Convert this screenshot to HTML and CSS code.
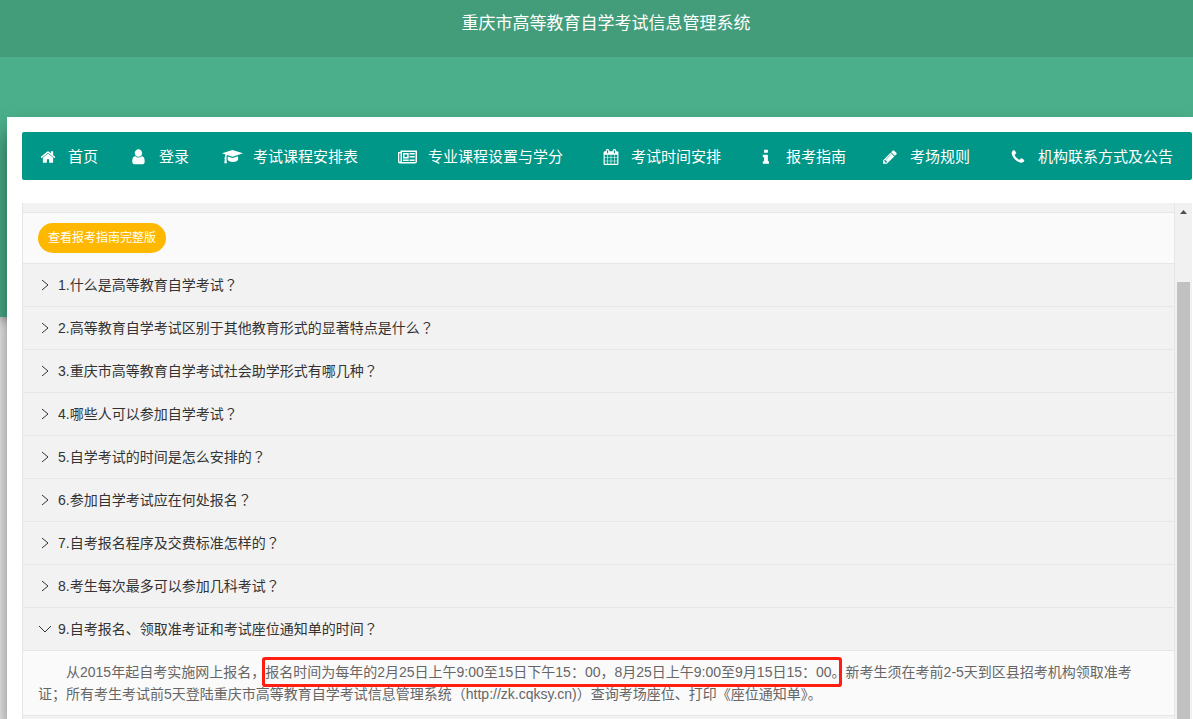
FILE: index.html
```
<!DOCTYPE html>
<html lang="zh-CN">
<head>
<meta charset="utf-8">
<title>重庆市高等教育自学考试信息管理系统</title>
<link rel="stylesheet" href="styles.css">
</head>
<body>
<div class="hero"></div>
<div class="page">
  <header class="header"><h1 class="title">重庆市高等教育自学考试信息管理系统</h1></header>
  <main class="panel">
    <nav class="nav">
      <a class="nav-item tight" href="#"><svg class="icon" viewBox="0 0 1792 1792"><path d="M1472 992v480q0 26-19 45t-45 19h-384v-384h-256v384h-384q-26 0-45-19t-19-45v-480q0-1 .5-3t.5-3l575-474 575 474q1 2 1 6zm223-69l-62 74q-8 9-21 11h-3q-13 0-21-7l-692-577-692 577q-12 8-24 7-13-2-21-11l-62-74q-8-10-7-23.5t11-21.5l719-599q32-26 76-26t76 26l244 204v-195q0-14 9-23t23-9h192q14 0 23 9t9 23v408l219 182q10 8 11 21.5t-7 23.5z"/></svg>首页</a>
      <a class="nav-item tight" href="#"><svg class="icon" viewBox="128 96 1648 1648"><path d="M1536 1399q0 109-62.5 187t-150.5 78h-854q-88 0-150.5-78t-62.5-187q0-85 8.5-160.5t31.5-152 58.5-131 94-89 134.5-34.5q131 128 313 128t313-128q76 0 134.5 34.5t94 89 58.5 131 31.5 152 8.5 160.5zm-256-887q0 159-112.5 271.5t-271.5 112.5-271.5-112.5-112.5-271.5 112.5-271.5 271.5-112.5 271.5 112.5 112.5 271.5z"/></svg>登录</a>
      <a class="nav-item" href="#"><svg class="icon wide" viewBox="0 0 21 16"><path d="M10.500 1L21 4.300L10.500 7.700L5.200 6C4.600 6.600 4.400 7.300 4.300 8.300C4.900 8.700 4.900 9.500 4.400 9.900L4.900 14.300H2.300L2.800 9.900C2.300 9.500 2.300 8.700 2.900 8.300C2.900 7.200 3.200 6.200 3.700 5.500L0 4.300Z"/><path d="M5.800 7.400L10.500 8.900L16 7.200L16.200 10.300C16 12 13.500 13 10.900 13C8.200 13 5.800 12 5.600 10.300Z"/></svg>考试课程安排表</a>
      <a class="nav-item" href="#"><svg class="icon news" viewBox="0 0 19 16"><path fill-rule="evenodd" d="M2.500 1.500H19V12.500Q19 14.500 17 14.500H2Q0 14.500 0 12.500V3H2.500ZM4 3V13H17.500V3ZM1.300 4.300V12.300Q1.900 13.500 2.500 12.300V4.300ZM5 4H10.700V9.500H5ZM6.500 5.500V8H9.200V5.500ZM5 10.500H10.700V12H5ZM11.500 4H16.700V5.500H11.500ZM11.500 7H16.700V8.500H11.500ZM11.500 10.500H16.700V12H11.500Z"/></svg>专业课程设置与学分</a>
      <a class="nav-item" href="#"><svg class="icon" viewBox="0 0 1792 1792"><path d="M192 1664h288v-288h-288v288zm352 0h320v-288h-320v288zm-352-352h288v-320h-288v320zm352 0h320v-320h-320v320zm-352-384h288v-288h-288v288zm736 736h320v-288h-320v288zm-384-736h320v-288h-320v288zm768 736h288v-288h-288v288zm-384-352h320v-320h-320v320zm-352-864v-288q0-13-9.500-22.500t-22.500-9.500h-64q-13 0-22.500 9.500t-9.500 22.500v288q0 13 9.500 22.500t22.500 9.500h64q13 0 22.500-9.500t9.500-22.500zm736 864h288v-320h-288v320zm-384-384h320v-288h-320v288zm384 0h288v-288h-288v288zm32-480v-288q0-13-9.500-22.500t-22.500-9.500h-64q-13 0-22.500 9.500t-9.500 22.500v288q0 13 9.500 22.500t22.500 9.500h64q13 0 22.500-9.500t9.500-22.500zm384-64v1280q0 52-38 90t-90 38h-1408q-52 0-90-38t-38-90v-1280q0-52 38-90t90-38h128v-96q0-66 47-113t113-47h64q66 0 113 47t47 113v96h384v-96q0-66 47-113t113-47h64q66 0 113 47t47 113v96h128q52 0 90 38t38 90z"/></svg>考试时间安排</a>
      <a class="nav-item medium" href="#"><svg class="icon slim" viewBox="400 64 800 1600"><path d="M1216 1344v128q0 26-19 45t-45 19h-512q-26 0-45-19t-19-45v-128q0-26 19-45t45-19h64v-384h-64q-26 0-45-19t-19-45v-128q0-26 19-45t45-19h384q26 0 45 19t19 45v576h64q26 0 45 19t19 45zm-128-1152v192q0 26-19 45t-45 19h-256q-26 0-45-19t-19-45v-192q0-26 19-45t45-19h256q26 0 45 19t19 45z"/></svg>报考指南</a>
      <a class="nav-item" href="#"><svg class="icon" viewBox="0 0 1792 1792"><path d="M491 1536l91-91-235-235-91 91v107h128v128h107zm523-928q0-22-22-22-10 0-17 7l-542 542q-7 7-7 17 0 22 22 22 10 0 17-7l542-542q7-7 7-17zm-54-192l416 416-832 832h-416v-416zm683 96q0 53-37 90l-166 166-416-416 166-165q36-38 90-38 53 0 91 38l235 234q37 39 37 91z"/></svg>考场规则</a>
      <a class="nav-item" href="#"><svg class="icon" viewBox="0 0 1792 1792"><path d="M1600 1240q0 27-10 70.500t-21 68.500q-21 50-122 106-94 51-186 51-27 0-53-3.500t-57.500-12.500-47-14.500-55.500-20.500-49-18q-98-35-175-83-127-79-264-216t-216-264q-48-77-83-175-3-9-18-49t-20.500-55.500-14.500-47-12.500-57.500-3.500-53q0-92 51-186 56-101 106-122 25-11 68.500-21t70.500-10q14 0 21 3 18 6 53 76 11 19 30 54t35 63.500 31 53.500q3 4 17.500 25t21.500 35.500 7 28.500q0 20-28.500 50t-62 55-62 53-28.500 46q0 9 5 22.500t8.500 20.500 14 24 11.500 19q76 137 174 235t235 174q2 1 19 11.500t24 14 20.500 8.500 22.500 5q18 0 46-28.500t53-62 55-62 50-28.500q14 0 28.500 7t35.500 21.500 25 17.500q25 15 53.500 31t63.500 35 54 30q70 35 76 53 3 7 3 21z"/></svg>机构联系方式及公告</a>
    </nav>
    <div class="scroller">
      <section class="faq">
        <div class="faq-tail"></div>
        <div class="answer"><button class="guide" type="button">查看报考指南完整版</button></div>
        <details class="item"><summary class="question"><svg class="chevron" viewBox="0 0 14 14"><path d="M4 2L10 7L4 12"/></svg><span>1.什么是高等教育自学考试<span lang="zh-TW">？</span></span></summary></details>
        <details class="item"><summary class="question"><svg class="chevron" viewBox="0 0 14 14"><path d="M4 2L10 7L4 12"/></svg><span>2.高等教育自学考试区别于其他教育形式的显著特点是什么<span lang="zh-TW">？</span></span></summary></details>
        <details class="item"><summary class="question"><svg class="chevron" viewBox="0 0 14 14"><path d="M4 2L10 7L4 12"/></svg><span>3.重庆市高等教育自学考试社会助学形式有哪几种<span lang="zh-TW">？</span></span></summary></details>
        <details class="item"><summary class="question"><svg class="chevron" viewBox="0 0 14 14"><path d="M4 2L10 7L4 12"/></svg><span>4.哪些人可以参加自学考试<span lang="zh-TW">？</span></span></summary></details>
        <details class="item"><summary class="question"><svg class="chevron" viewBox="0 0 14 14"><path d="M4 2L10 7L4 12"/></svg><span>5.自学考试的时间是怎么安排的<span lang="zh-TW">？</span></span></summary></details>
        <details class="item"><summary class="question"><svg class="chevron" viewBox="0 0 14 14"><path d="M4 2L10 7L4 12"/></svg><span>6.参加自学考试应在何处报名<span lang="zh-TW">？</span></span></summary></details>
        <details class="item"><summary class="question"><svg class="chevron" viewBox="0 0 14 14"><path d="M4 2L10 7L4 12"/></svg><span>7.自考报名程序及交费标准怎样的<span lang="zh-TW">？</span></span></summary></details>
        <details class="item"><summary class="question"><svg class="chevron" viewBox="0 0 14 14"><path d="M4 2L10 7L4 12"/></svg><span>8.考生每次最多可以参加几科考试<span lang="zh-TW">？</span></span></summary></details>
        <details class="item" open><summary class="question"><svg class="chevron" viewBox="0 0 14 14"><path d="M1 4L7 10L13 4"/></svg><span>9.自考报名、领取准考证和考试座位通知单的时间<span lang="zh-TW">？</span></span></summary>
          <div class="answer"><p class="text">从2015年起自考实施网上报名，<span class="marked">报名时间为每年的2月25日上午9:00至15日下午15：00，8月25日上午9:00至9月15日15：00</span>。新考生须在考前2-5天到区县招考机构领取准考证；所有考生考试前5天登陆重庆市高等教育自学考试信息管理系统（http://zk.cqksy.cn)）查询考场座位、打印《座位通知单》。</p></div>
        </details>
        <div class="item faq-tail"></div>
      </section>
      <div class="scrollbar"><svg class="arrow" viewBox="0 0 17 17"><path d="M5 11L8.500 7L12 11Z"/></svg><div class="thumb"></div></div>
    </div>
  </main>
</div>
</body>
</html>
```

FILE: styles.css
```
* { box-sizing: border-box; }
body {
  margin: 0;
  background: #f0f0f0;
  color: #333;
  font: 14px/22px "Liberation Sans", "Noto Sans CJK SC", sans-serif;
}
.hero {
  position: absolute;
  top: 0;
  left: 0;
  width: 100%;
  height: 317px;
  background: #4aaf8a;
  box-shadow: 0 2px 10px rgba(0, 0, 0, .4);
}
.page {
  position: relative;
  height: 100vh;
  display: flex;
  flex-direction: column;
  overflow: hidden;
}
.header {
  height: 57px;
  padding: 11px 0 0 19px;
  background: #439d7b;
  text-align: center;
}
.title {
  margin: 0;
  color: #fff;
  font-size: 17px;
  line-height: 26px;
  font-weight: 400;
}
.panel {
  flex: 1;
  min-height: 0;
  margin: 60px 0 0 7px;
  padding: 15px 1px 0 15px;
  display: flex;
  flex-direction: column;
  gap: 23px;
  background: #fff;
  box-shadow: 0 15px 20px rgba(0, 0, 0, .5);
}
.nav {
  display: flex;
  align-items: center;
  gap: 40px;
  min-height: 48px;
  padding: 2px 18px 0;
  background: #009688;
  border-radius: 2px;
}
.nav-item {
  display: flex;
  align-items: center;
  color: #fff;
  font-size: 15px;
  white-space: nowrap;
  text-decoration: none;
}
.tight { margin-right: -7px; }
.medium { margin-right: -4px; }
.icon {
  width: 16px;
  height: 16px;
  margin-right: 12px;
  fill: #fff;
}
.wide { width: 21px; margin-right: 10px; }
.news { width: 19px; margin-right: 11px; }
.slim { width: 8px; margin-right: 17px; }
.scroller {
  flex: 1;
  min-height: 0;
  display: flex;
  overflow: hidden;
}
.faq {
  flex: 1;
  border: solid #e6e6e6;
  border-width: 0 1px;
}
.faq-tail { height: 9px; background: #f2f2f2; }
.item { border-top: 1px solid #e6e6e6; }
.question {
  display: flex;
  align-items: center;
  gap: 6px;
  height: 42px;
  padding: 0 15px;
  background: #f2f2f2;
  cursor: pointer;
  list-style: none;
}
.chevron {
  width: 14px;
  height: 14px;
  fill: none;
  stroke: #333;
}
.answer {
  padding: 10px 15px;
  border-top: 1px solid #e6e6e6;
  background: #fafafa;
  color: #666;
}
.guide {
  display: block;
  height: 30px;
  padding: 0 10px;
  border: 0;
  border-radius: 15px;
  background: #ffb800;
  color: #fff;
  font: 12px/30px "Liberation Sans", "Noto Sans CJK SC", sans-serif;
}
.text { margin: 0; text-indent: 2em; }
.marked {
  margin-right: -7px;
  padding: 4px 7px 4px 0;
  border-radius: 1px;
  box-shadow: 0 0 0 3px #ff1e10;
}
.scrollbar {
  width: 17px;
  display: flex;
  flex-direction: column;
  background: #f1f1f1;
}
.arrow { height: 17px; fill: #505050; }
.thumb {
  flex: 1;
  margin: 62px 2px 0;
  background: #c1c1c1;
}
```
